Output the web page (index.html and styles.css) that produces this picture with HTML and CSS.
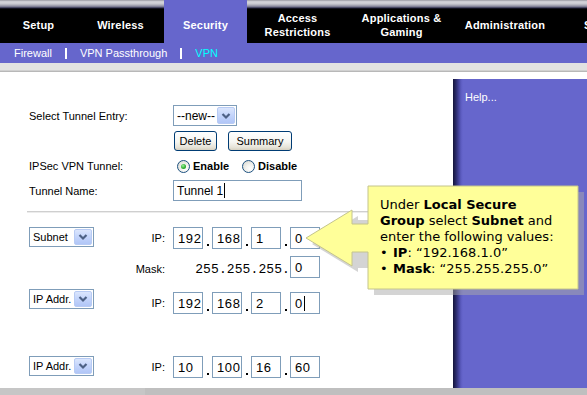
FILE: index.html
```html
<!DOCTYPE html>
<html>
<head>
<meta charset="utf-8">
<title>VPN</title>
<link rel="stylesheet" href="styles.css">
</head>
<body>
<div class="page">
  <nav class="tabs">
    <div class="tab t-setup">Setup</div>
    <div class="tab t-wireless">Wireless</div>
    <div class="tab t-security active">Security</div>
    <div class="tab t-access">Access<br>Restrictions</div>
    <div class="tab t-apps">Applications &amp;<br>Gaming</div>
    <div class="tab t-admin">Administration</div>
    <div class="tab t-status">Status</div>
  </nav>
  <div class="subnav">
    <span class="sub">Firewall</span><span class="sep"></span><span class="sub">VPN Passthrough</span><span class="sep"></span><span class="sub current">VPN</span>
  </div>
  <div class="band"></div>
  <div class="main">
    <div class="content">
      <div class="row r-entry">
        <div class="lbl">Select Tunnel Entry:</div>
        <div class="sel sel-new"><span class="sel-txt">--new--</span><span class="sel-btn"><svg width="16" height="16" viewBox="0 0 16 16"><path d="M4.5 6 L8 9.5 L11.5 6" fill="none" stroke="#4d6185" stroke-width="2.2"/></svg></span></div>
      </div>
      <div class="row r-buttons">
        <span class="btn b-delete">Delete</span>
        <span class="btn b-summary">Summary</span>
      </div>
      <div class="row r-radio">
        <div class="lbl">IPSec VPN Tunnel:</div>
        <span class="radio checked"></span><span class="rlabel">Enable</span>
        <span class="radio r-second"></span><span class="rlabel">Disable</span>
      </div>
      <div class="row r-name">
        <div class="lbl">Tunnel Name:</div>
        <div class="field f-name">Tunnel 1<span class="caret"></span></div>
      </div>
      <div class="rule"></div>

      <div class="row iprow r-a">
        <div class="selcol"><div class="sel sel-small"><span class="sel-txt">Subnet</span><span class="sel-btn"><svg width="16" height="16" viewBox="0 0 16 16"><path d="M4.5 6 L8 9.5 L11.5 6" fill="none" stroke="#4d6185" stroke-width="2.2"/></svg></span></div></div>
        <div class="iplbl">IP:</div>
        <div class="ipfields">
          <div class="field f-oct">192</div><span class="dot"><i></i></span>
          <div class="field f-oct">168</div><span class="dot"><i></i></span>
          <div class="field f-oct">1</div><span class="dot"><i></i></span>
          <div class="field f-oct">0</div>
        </div>
      </div>
      <div class="row iprow r-mask">
        <div class="selcol"></div>
        <div class="iplbl mask-lbl">Mask:</div>
        <div class="ipfields">
          <span class="masktxt">255.255.255.</span>
          <div class="field f-oct">0</div>
        </div>
      </div>
      <div class="row iprow r-b">
        <div class="selcol"><div class="sel sel-small"><span class="sel-txt">IP Addr.</span><span class="sel-btn"><svg width="16" height="16" viewBox="0 0 16 16"><path d="M4.5 6 L8 9.5 L11.5 6" fill="none" stroke="#4d6185" stroke-width="2.2"/></svg></span></div></div>
        <div class="iplbl">IP:</div>
        <div class="ipfields">
          <div class="field f-oct">192</div><span class="dot"><i></i></span>
          <div class="field f-oct">168</div><span class="dot"><i></i></span>
          <div class="field f-oct">2</div><span class="dot"><i></i></span>
          <div class="field f-oct">0<span class="caret"></span></div>
        </div>
      </div>
      <div class="row iprow r-c">
        <div class="selcol"><div class="sel sel-small"><span class="sel-txt">IP Addr.</span><span class="sel-btn"><svg width="16" height="16" viewBox="0 0 16 16"><path d="M4.5 6 L8 9.5 L11.5 6" fill="none" stroke="#4d6185" stroke-width="2.2"/></svg></span></div></div>
        <div class="iplbl">IP:</div>
        <div class="ipfields">
          <div class="field f-oct">10</div><span class="dot"><i></i></span>
          <div class="field f-oct">100</div><span class="dot"><i></i></span>
          <div class="field f-oct">16</div><span class="dot"><i></i></span>
          <div class="field f-oct">60</div>
        </div>
      </div>
    </div>
    <aside class="help">Help...</aside>
  </div>
  <div class="footer"><div class="footer-left"></div></div>

  <div class="callout">
    <svg class="callout-shape" width="290" height="120" viewBox="0 0 290 120">
      <path d="M74 12 H284 V115 H74 V88 H58 V92 L12 64 L58 36 V40 H74 Z" fill="rgba(170,170,170,0.5)"/>
      <path d="M68 6 H278 V109 H68 V72 H52 V86 L6 58 L52 30 V44 H68 Z" fill="#ffff99" stroke="#c4c48c" stroke-width="1"/>
    </svg>
    <div class="callout-text">
      <div>Under <b>Local Secure</b></div>
      <div><b>Group</b> select <b>Subnet</b> and</div>
      <div>enter the following values:</div>
      <div class="bul"><span class="bdot">•</span><b>IP</b>: “192.168.1.0”</div>
      <div class="bul"><span class="bdot">•</span><b>Mask</b>: “255.255.255.0”</div>
    </div>
  </div>
</div>
</body>
</html>
```
FILE: styles.css
```css
* { box-sizing: border-box; }
html, body { margin: 0; padding: 0; }
body {
  width: 587px;
  height: 395px;
  overflow: hidden;
  background: #fff;
  font-family: "Liberation Sans", Arial, sans-serif;
  color: #000;
}
.page {
  position: relative;
  width: 587px;
  height: 395px;
  overflow: hidden;
}

/* ---------- top tabs ---------- */
.tabs {
  display: flex;
  height: 43px;
  background: linear-gradient(to bottom,
    #8c8c94 0px, #c8c8d0 1px, #d4d4da 3px, #b0b0bc 5px,
    #70708a 7px, #22223e 8px, #000 9px, #000 100%);
}
.tab {
  flex: 0 0 auto;
  display: flex;
  align-items: center;
  justify-content: center;
  text-align: center;
  padding-top: 7px;
  color: #fff;
  font-weight: bold;
  font-size: 11px;
  line-height: 14px;
  letter-spacing: 0.2px;
  white-space: nowrap;
}
.t-setup { width: 77px; }
.t-wireless { width: 87px; }
.t-security { width: 83px; }
.t-access { width: 101px; }
.t-apps { width: 107px; }
.t-admin { width: 100px; }
.t-status { width: 93px; }
.tab.active { background: #6666cc; }

/* ---------- sub nav ---------- */
.subnav {
  display: flex;
  align-items: center;
  height: 20px;
  padding-left: 14px;
  background: #6666cc;
  color: #fff;
  font-size: 11px;
}
.sep {
  width: 2px;
  height: 11px;
  margin: 1px 13px 0 13px;
  background: #fff;
}
.sub.current { color: #00ffff; }

.band {
  height: 9px;
  background: #e2e2e2;
  box-shadow: inset 0 -1px 0 #b8b8b8, inset 0 -2px 0 #d0d0d0;
}

/* ---------- main ---------- */
.main {
  display: flex;
  height: 316px;
  background: #fff;
}
.content {
  flex: 0 0 453px;
  padding: 33px 0 0 29px;
  font-size: 11px;
  overflow: hidden;
}
.help {
  flex: 1;
  margin-top: 7px;
  padding: 12px 0 0 12px;
  color: #fff;
  font-size: 11px;
  background: linear-gradient(to right, #14143a 0px, #2a2a6a 3px, #4646a0 6px, #5c5cc0 8px, #6666cc 10px);
}
.footer {
  height: 7px;
  background: #bfbfbf;
}
.footer-left {
  width: 145px;
  height: 7px;
  background: #c6c6c6;
}

/* ---------- form ---------- */
.row { display: flex; align-items: center; }
.lbl { flex: 0 0 144px; }

.r-entry { height: 21px; }
.r-buttons { margin-top: 5px; padding-left: 145px; height: 20px; }
.r-radio { margin-top: 7px; height: 16px; }
.r-name { margin-top: 6px; height: 21px; }

.sel {
  display: flex;
  height: 21px;
  border: 1px solid #7f9db9;
  background: #fff;
}
.sel-new { width: 64px; font-size: 12px; }
.sel-small { width: 65px; height: 20px; font-size: 11px; }
.sel-txt {
  flex: 1;
  padding-left: 3px;
  display: flex;
  align-items: center;
  white-space: nowrap;
  overflow: hidden;
}
.sel-btn {
  flex: 0 0 16px;
  margin: 1px;
  display: flex;
  align-items: center;
  justify-content: center;
  border: 1px solid #b8cbf4;
  border-radius: 2px;
  background: linear-gradient(to bottom, #dbe6fd 0%, #c3d4fb 50%, #b1c6f7 100%);
}
.sel-btn svg { display: block; }

.btn {
  display: flex;
  align-items: center;
  justify-content: center;
  height: 20px;
  border: 1px solid #003c74;
  border-radius: 3px;
  background: linear-gradient(to bottom, #ffffff 0%, #f6f6f2 55%, #e6e3d8 85%, #d6d0c0 100%);
  font-size: 11px;
}
.b-delete { width: 43px; }
.b-summary { width: 64px; margin-left: 11px; }

.radio {
  flex: 0 0 13px;
  width: 13px;
  height: 13px;
  margin-left: 4px;
  border: 1px solid #1c5180;
  border-radius: 50%;
  background: radial-gradient(circle at 65% 70%, #ffffff 0%, #f2f2ee 40%, #d4d4cc 100%);
  display: flex;
  align-items: center;
  justify-content: center;
}
.radio.checked::after {
  content: "";
  width: 5px;
  height: 5px;
  border-radius: 50%;
  background: radial-gradient(circle at 40% 35%, #9ef09e 0%, #31b031 55%, #1a8c1a 100%);
}
.r-second { margin-left: 13px; }
.rlabel {
  margin-left: 3px;
  font-weight: bold;
  font-size: 11px;
}

.field {
  display: flex;
  align-items: center;
  border: 1px solid #7f9db9;
  background: #fff;
  padding-left: 3px;
  font-size: 12px;
  white-space: nowrap;
}
.f-name { width: 129px; height: 21px; }
.caret {
  display: inline-block;
  width: 1px;
  height: 15px;
  margin-left: 1px;
  background: #000;
}
.rule {
  margin: 10px 0 0 -2px;
  height: 2px;
  border-top: 1px solid #cfcfcf;
  background: #ececec;
}

.iprow { align-items: flex-start; height: 22px; }
.selcol { flex: 0 0 100px; }
.iplbl {
  flex: 0 0 36px;
  height: 22px;
  text-align: right;
  margin-right: 8px;
  line-height: 22px;
}
.ipfields { display: flex; align-items: stretch; height: 22px; }
.f-oct {
  width: 30px;
  height: 22px;
  font-size: 13px;
  letter-spacing: 0.6px;
  padding-left: 4px;
}
.dot {
  width: 9px;
  display: flex;
  align-items: flex-end;
  justify-content: center;
}
.dot i {
  display: block;
  width: 2px;
  height: 2px;
  margin-bottom: 3px;
  background: #000;
}

.r-a { margin-top: 14px; }
.r-mask { margin-top: 7px; }
.mask-lbl { line-height: 27px; }
.masktxt {
  width: 117px;
  height: 22px;
  text-align: right;
  font-family: "Liberation Mono", "Courier New", monospace;
  font-size: 13px;
  letter-spacing: 0.1px;
  line-height: 28px;
}
.r-b { margin-top: 11px; }
.r-b .ipfields, .r-b .iplbl { margin-top: 3px; }
.r-c { margin-top: 45px; }

/* ---------- callout ---------- */
.callout {
  position: absolute;
  left: 300px;
  top: 180px;
  width: 290px;
  height: 120px;
}
.callout-shape {
  position: absolute;
  left: 0;
  top: 0;
}
.callout-text {
  position: relative;
  margin: 6px 0 0 68px;
  padding: 11px 0 0 12px;
  width: 210px;
  font-family: "DejaVu Sans", Verdana, sans-serif;
  font-size: 13px;
  line-height: 16px;
  white-space: nowrap;
}
.bdot {
  display: inline-block;
  width: 13px;
}
```
